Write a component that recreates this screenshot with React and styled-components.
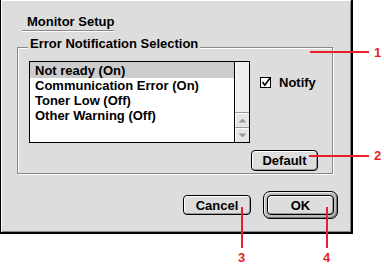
import { createGlobalStyle, styled } from "styled-components";

const GlobalStyle = createGlobalStyle`
  body {
    margin: 0;
    background: #ffffff;
    font-family: "Liberation Sans", Arial, sans-serif;
  }
`;

const Stage = styled.div`
  position: relative;
  width: 384px;
  height: 265px;
  overflow: hidden;
`;

const Window = styled.div`
  width: 353px;
  height: 234px;
  box-sizing: border-box;
  border-left: 1px solid #000;
  border-right: 2px solid #000;
  border-bottom: 2px solid #000;
  background: #dddddd;
  box-shadow: inset 1px 1px 0 #fff, inset -1px -1px 0 #888;
  display: flex;
  flex-direction: column;
  align-items: flex-start;
  font-size: 13px;
  font-weight: bold;
  color: #000;
  white-space: nowrap;
`;

const Title = styled.div`
  margin: 14px 0 0 21px;
  width: 92px;
  box-sizing: border-box;
  padding: 0 0 1px 5px;
  line-height: 15px;
  border-bottom: 1px solid #888;
  box-shadow: 0 1px 0 #fff;
`;

const Group = styled.div`
  margin: 16px 0 0 16px;
  width: 316px;
  height: 127px;
  box-sizing: border-box;
  border: 1px solid #888;
  box-shadow: inset 1px 1px 0 #fff, 1px 1px 0 #fff;
  display: flex;
  flex-direction: column;
  align-items: flex-start;
`;

const Legend = styled.div`
  margin: -12px 0 0 10px;
  padding: 0 2px;
  line-height: 15px;
  background: #dddddd;
`;

const GroupBody = styled.div`
  display: flex;
  margin: 10px 0 0 11px;
`;

const List = styled.div`
  width: 221px;
  height: 82px;
  box-sizing: border-box;
  border: 1px solid #000;
  background: #fff;
  display: flex;
`;

const Rows = styled.div`
  flex: 1;
  display: flex;
  flex-direction: column;
`;

const Row = styled.div`
  line-height: 15px;
  padding: ${(p) => (p.$selected ? "1px" : "0")} 0 0 5px;
  background: ${(p) => (p.$selected ? "#cccccc" : "transparent")};
`;

const ScrollBar = styled.div`
  width: 15px;
  box-sizing: border-box;
  border-left: 1px solid #000;
  display: flex;
  flex-direction: column;
  background: #eeeeee;
`;

const Track = styled.div`
  flex: 1;
  box-shadow: inset 1px 0 0 #fff;
`;

const ArrowBox = styled.div`
  height: 15px;
  box-sizing: border-box;
  border-top: 1px solid #999;
  display: flex;
  align-items: center;
  justify-content: center;
  background: #e6e6e6;
  box-shadow: inset 1px 1px 0 #fff;
`;

const Side = styled.div`
  display: flex;
  flex-direction: column;
  align-items: flex-start;
  margin-left: 1px;
`;

const NotifyRow = styled.label`
  display: flex;
  align-items: center;
  gap: 6px;
  height: 12px;
  line-height: 12px;
  margin: 16px 0 0 9px;
`;

const Button = styled.button`
  width: ${(p) => p.$w}px;
  height: ${(p) => p.$h}px;
  margin-top: ${(p) => p.$top || 0}px;
  padding: 0;
  font: bold 13px "Liberation Sans", Arial, sans-serif;
  color: #000;
  background: #dddddd;
  border: 1px solid #000;
  border-radius: 4px;
  box-shadow: inset 1px 1px 0 #fff, inset -1px -1px 0 #999;
`;

const ButtonRow = styled.div`
  align-self: stretch;
  display: flex;
  justify-content: flex-end;
  align-items: center;
  gap: 12px;
  margin-top: 17px;
  padding-right: 13px;
`;

const DefaultRing = styled.div`
  display: flex;
  padding: 3px;
  border: 1px solid #000;
  border-radius: 7px;
  background: #bbbbbb;
  box-shadow: inset 1px 1px 0 #eee, inset -1px -1px 0 #777;
`;

const Callout = styled.div`
  position: absolute;
  left: ${(p) => p.$x}px;
  top: ${(p) => p.$y}px;
  width: ${(p) => p.$w}px;
  height: ${(p) => p.$h}px;
  background: #e8202e;
`;

const Label = styled.div`
  position: absolute;
  left: ${(p) => p.$x}px;
  top: ${(p) => p.$y}px;
  font: bold 13px/13px "Liberation Sans", Arial, sans-serif;
  color: #e8202e;
`;

const Check = () => (
  <svg width="13" height="12" viewBox="0 0 13 12">
    <rect x="0.5" y="0.5" width="10" height="10" fill="#fff" stroke="#000" />
    <path d="M2.5 5 L4.8 8.2 L10.5 0.5" fill="none" stroke="#000" strokeWidth="1.6" />
  </svg>
);

const Arrow = ({ down }) => (
  <svg width="9" height="5" viewBox="0 0 9 5">
    <path d={down ? "M0.5 0.5 H8.5 L4.5 4.5 Z" : "M4.5 0.5 L8.5 4.5 H0.5 Z"} fill="#999" />
  </svg>
);

const items = [
  "Not ready (On)",
  "Communication Error (On)",
  "Toner Low (Off)",
  "Other Warning (Off)",
];

export default function App() {
  return (
    <Stage>
      <GlobalStyle />
      <Window>
        <Title>Monitor Setup</Title>
        <Group>
          <Legend>Error Notification Selection</Legend>
          <GroupBody>
            <List>
              <Rows>
                {items.map((t, i) => (
                  <Row key={t} $selected={i === 0}>
                    {t}
                  </Row>
                ))}
              </Rows>
              <ScrollBar>
                <Track />
                <ArrowBox>
                  <Arrow />
                </ArrowBox>
                <ArrowBox>
                  <Arrow down />
                </ArrowBox>
              </ScrollBar>
            </List>
            <Side>
              <NotifyRow>
                <Check />
                Notify
              </NotifyRow>
              <Button $w={67} $h={21} $top={61}>
                Default
              </Button>
            </Side>
          </GroupBody>
        </Group>
        <ButtonRow>
          <Button $w={68} $h={20}>
            Cancel
          </Button>
          <DefaultRing>
            <Button $w={67} $h={20}>
              OK
            </Button>
          </DefaultRing>
        </ButtonRow>
      </Window>

      <Callout $x={310} $y={51} $w={59} $h={2} />
      <Label $x={374} $y={46}>1</Label>
      <Callout $x={309} $y={155} $w={60} $h={2} />
      <Label $x={374} $y={149}>2</Label>
      <Callout $x={241} $y={207} $w={2} $h={41} />
      <Label $x={238} $y={251}>3</Label>
      <Callout $x={326} $y={207} $w={2} $h={41} />
      <Label $x={323} $y={251}>4</Label>
    </Stage>
  );
}
